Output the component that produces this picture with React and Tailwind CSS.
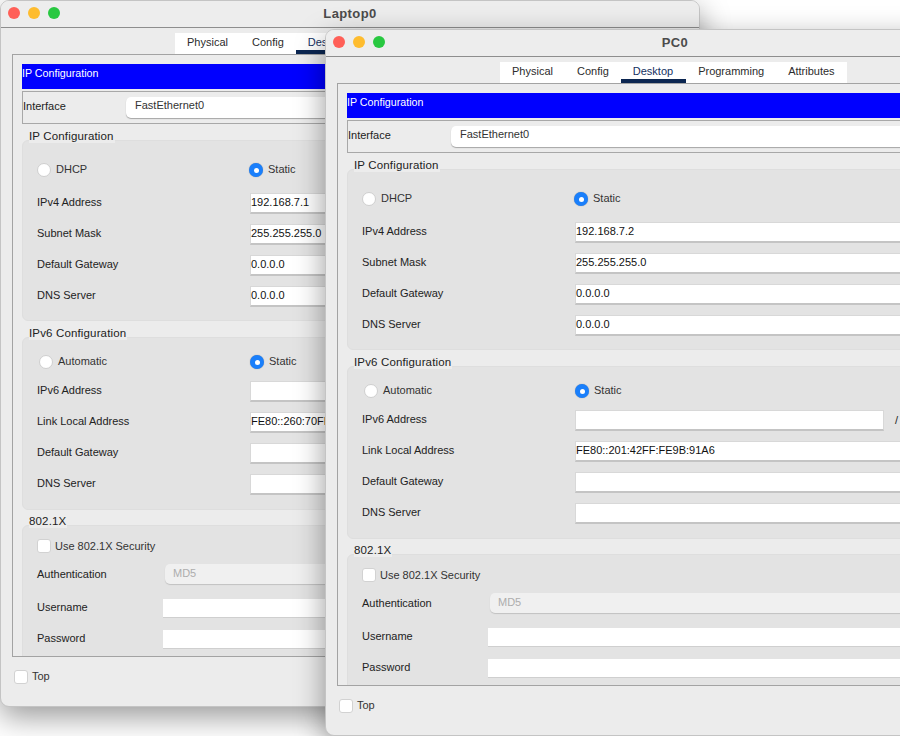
import React from "react";

function Radio({ on }) {
  return on ? (
    <span className="flex h-[14px] w-[14px] shrink-0 items-center justify-center rounded-full bg-[#1a7ffb] shadow-[0_0_1px_rgba(0,0,0,0.4)]">
      <span className="h-[5px] w-[5px] rounded-full bg-white" />
    </span>
  ) : (
    <span className="h-[14px] w-[14px] shrink-0 rounded-full border border-[#cfcfcf] bg-white" />
  );
}

function Check() {
  return <span className="h-[14px] w-[14px] shrink-0 rounded-[3px] border border-[#d2d2d2] bg-white" />;
}

function Legend({ children, top }) {
  return (
    <div className={`relative z-10 ml-[7px] h-[14px] w-fit bg-[#ececec] pr-[1px] text-[11.5px] leading-[14px] tracking-[0.15px] text-[#222] ${top}`}>
      {children}
    </div>
  );
}

function Field({ label, value, tail }) {
  return (
    <div className="flex h-[21px] items-center">
      <span className="w-[213px] shrink-0 pb-[3px] text-[#222]">{label}</span>
      <span className={`flex h-[21px] shrink-0 items-center border-t border-r border-t-[#d8d8d8] border-r-[#d8d8d8] border-b-2 border-b-[#c4c4c4] border-l border-l-[#d8d8d8] bg-white pb-[1px] text-[#111] ${tail ? "w-[309px]" : "w-[420px]"}`}>
        {value}
      </span>
      {tail && <span className="ml-[11px] text-[#222]">/</span>}
    </div>
  );
}

function RadioRow({ left, leftOffset }) {
  return (
    <div className="flex h-[20px] items-center">
      <span className={`flex shrink-0 items-center gap-[5px] text-[#333] ${leftOffset}`}>
        <Radio />
        <span className="pb-[2px]">{left}</span>
      </span>
      <span className="flex items-center gap-[5px] text-[#333]">
        <Radio on />
        <span className="pb-[2px]">Static</span>
      </span>
    </div>
  );
}

function Window({ title, ip, linkLocal, v6Tail, position }) {
  return (
    <section className={`absolute flex h-[707px] w-[700px] flex-col overflow-hidden rounded-[9px] border border-[#c4c4c4] bg-[#ececec] shadow-[0_10px_30px_rgba(0,0,0,0.4)] ${position}`}>
      <header className="relative flex h-[27px] shrink-0 items-center justify-center border-b border-b-[#8e8e8e] bg-[#ededed] pb-[2px]">
        <div className="absolute left-[7px] top-[6px] flex gap-[8px]">
          <span className="h-[12px] w-[12px] rounded-full bg-[#ff5f57]" />
          <span className="h-[12px] w-[12px] rounded-full bg-[#febc2e]" />
          <span className="h-[12px] w-[12px] rounded-full bg-[#28c840]" />
        </div>
        <span className="text-[13px] font-bold tracking-[0.4px] text-[#4b4b4b]">{title}</span>
      </header>

      <nav className="ml-[174px] mt-[5px] flex h-[21px] w-fit shrink-0 items-stretch bg-white text-[#2c2c2c]">
        <span className="flex items-center px-3 pb-[2px]">Physical</span>
        <span className="flex items-center px-3 pb-[2px]">Config</span>
        <span className="flex items-center border-b-[4px] border-b-[#0b2651] pl-3 pr-[13px] pt-[2px] text-[#15305f]">Desktop</span>
        <span className="flex items-center px-3 pb-[2px]">Programming</span>
        <span className="flex items-center px-3 pb-[2px]">Attributes</span>
      </nav>

      <div className="ml-[11px] h-[603px] w-[676px] shrink-0 overflow-hidden border border-[#a3a3a3] pl-[9px] pr-[9px] pt-[9px]">
        <div className="flex h-[25px] items-start bg-[#0000ff] pt-[3px] text-[10.7px] leading-[12px] text-white">IP Configuration</div>

        <div className="mt-[2px] flex h-[33px] items-center border border-[#a8a8a8]">
          <span className="w-[103px] shrink-0 pb-[3px] text-[#222]">Interface</span>
          <span className="flex h-[21px] w-[540px] items-center rounded-[5px] bg-white pb-[4px] pl-[9px] text-[#333] shadow-[0_1px_1px_rgba(0,0,0,0.3)]">FastEthernet0</span>
        </div>

        <Legend top="mt-[5px]">IP Configuration</Legend>
        <div className="-mt-[3px] h-[181px] rounded-[6px] border border-[#dedede] bg-[#e3e3e3] pl-[14px] pt-[19px]">
          <RadioRow left="DHCP" leftOffset="w-[212px]" />
          <div className="mt-[13px] flex flex-col gap-[10px]">
            <Field label="IPv4 Address" value={ip} />
            <Field label="Subnet Mask" value="255.255.255.0" />
            <Field label="Default Gateway" value="0.0.0.0" />
            <Field label="DNS Server" value="0.0.0.0" />
          </div>
        </div>

        <Legend top="mt-[5px]">IPv6 Configuration</Legend>
        <div className="-mt-[3px] h-[173px] rounded-[6px] border border-[#dedede] bg-[#e3e3e3] pl-[14px] pt-[14px]">
          <RadioRow left="Automatic" leftOffset="ml-[2px] w-[211px]" />
          <div className="mt-[9px] flex flex-col gap-[10px]">
            <Field label="IPv6 Address" value="" tail={v6Tail} />
            <Field label="Link Local Address" value={linkLocal} />
            <Field label="Default Gateway" value="" />
            <Field label="DNS Server" value="" />
          </div>
        </div>

        <Legend top="mt-[4px]">802.1X</Legend>
        <div className="-mt-[3px] h-[170px] rounded-[6px] border border-[#dedede] bg-[#e3e3e3] pl-[14px] pt-[13px]">
          <div className="flex h-[14px] items-center gap-[4px] text-[#333]">
            <Check />
            <span>Use 802.1X Security</span>
          </div>
          <div className="mt-[11px] flex h-[20px] items-center">
            <span className="w-[128px] shrink-0 text-[#222]">Authentication</span>
            <span className="flex h-[20px] w-[500px] items-center rounded-[5px] bg-[#f0f0f0] pb-[2px] pl-[8px] text-[#adadad] shadow-[0_1px_1px_rgba(0,0,0,0.15)]">MD5</span>
          </div>
          <div className="mt-[15px] flex h-[19px] items-center">
            <span className="w-[126px] shrink-0 pb-[3px] text-[#222]">Username</span>
            <span className="h-[19px] w-[505px] border-b border-b-[#cfcfcf] bg-white" />
          </div>
          <div className="mt-[12px] flex h-[19px] items-center">
            <span className="w-[126px] shrink-0 pb-[3px] text-[#222]">Password</span>
            <span className="h-[19px] w-[505px] border-b border-b-[#cfcfcf] bg-white" />
          </div>
        </div>
      </div>

      <div className="ml-[13px] mt-[13px] flex items-center gap-[4px] text-[#333]">
        <Check />
        <span className="pb-[1px]">Top</span>
      </div>
    </section>
  );
}

export default function App() {
  return (
    <main className="relative h-[736px] w-[900px] overflow-hidden bg-white font-['Liberation_Sans',Arial,sans-serif] text-[11px] leading-[13px]">
      <Window title="Laptop0" ip="192.168.7.1" linkLocal="FE80::260:70FF:FE34:8B12" position="left-0 top-0" />
      <Window title="PC0" ip="192.168.7.2" linkLocal="FE80::201:42FF:FE9B:91A6" v6Tail position="left-[325px] top-[29px]" />
    </main>
  );
}
